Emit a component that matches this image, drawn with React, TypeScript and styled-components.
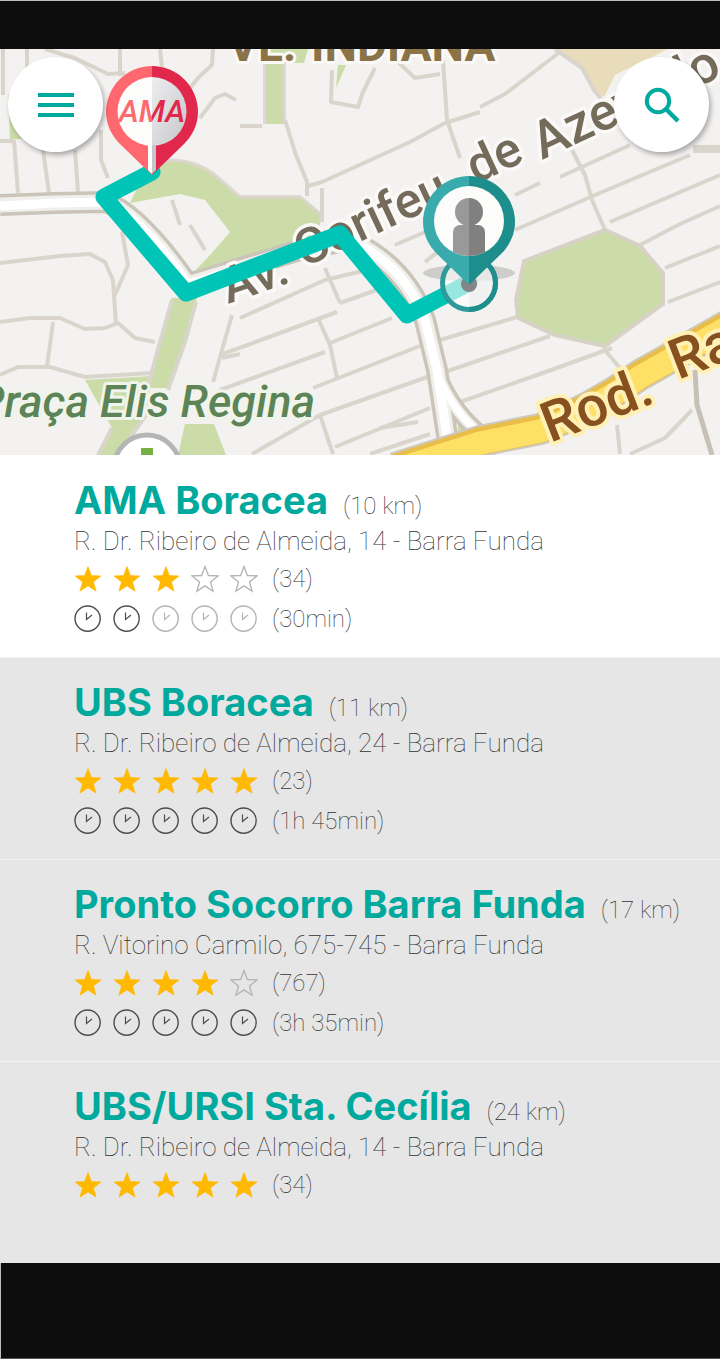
import React from "react";
import styled, { createGlobalStyle } from "styled-components";

const teal = "#00a99d";

const GlobalStyle = createGlobalStyle`
  * { box-sizing: border-box; }
  body { margin: 0; background: #0d0d0d; font-family: Roboto, "Liberation Sans", sans-serif; }
`;

const Screen = styled.div`
  display: flex;
  flex-direction: column;
  min-height: 100vh;
  background: #0d0d0d;
`;

const StatusBar = styled.div`
  height: 49px;
  border-top: 1px solid #bfbfbf;
  background: #0d0d0d;
`;

const NavigationBar = styled.div`
  flex: 1;
  min-height: 96px;
  border-left: 1px solid #bfbfbf;
  border-bottom: 1px solid #555;
  background: #0d0d0d;
`;

const MapPanel = styled.section`
  position: relative;
  height: 406px;
  overflow: hidden;
  background: #f3f2f0;
`;

const MapCanvas = styled.svg`
  display: block;
  width: 100%;
  height: 100%;
`;

const MapControls = styled.div`
  position: absolute;
  top: 0;
  left: 0;
  right: 0;
  display: flex;
  justify-content: space-between;
  padding: 8px 11px 0 8px;
`;

const RoundButton = styled.button`
  display: flex;
  align-items: center;
  justify-content: center;
  width: 95px;
  height: 95px;
  padding: 0;
  border: 0;
  border-radius: 50%;
  background: #fff;
  box-shadow: 2px 3px 5px rgba(0, 0, 0, 0.3);
  cursor: pointer;
`;

const PlaceList = styled.ul`
  margin: 0;
  padding: 0;
  list-style: none;
`;

const PlaceItem = styled.li<{ $active?: boolean }>`
  min-height: 202px;
  padding: 24px 24px 0 74px;
  border-top: 1px solid ${(p) => (p.$active ? "#fff" : "#f2f2f2")};
  background: ${(p) => (p.$active ? "#fff" : "#e6e6e6")};
  color: #333;
`;

const Heading = styled.div`
  display: flex;
  align-items: baseline;
  gap: 15px;
  height: 42px;
  white-space: nowrap;
`;

const Name = styled.h2`
  margin: 0;
  font: 700 38px/40px Inter, "Liberation Sans", sans-serif;
  color: ${teal};
`;

const Detail = styled.span`
  font-size: 24px;
  font-weight: 100;
  line-height: 36px;
`;

const Address = styled.p`
  margin: 0;
  font-size: 26px;
  font-weight: 100;
  line-height: 38px;
  height: 37px;
  white-space: nowrap;
`;

const Meter = styled.div`
  display: flex;
  align-items: center;
  gap: 14px;
  height: 40px;
`;

const Icons = styled.div`
  display: flex;
  gap: 11px;
`;

const Star = ({ on }: { on: boolean }) => (
  <svg width="28" height="28" viewBox="0 0 28 28" aria-hidden="true">
    <path
      d="M14 1.500l3.400 9 9.600.4-7.500 6 2.600 9.300-8.100-5.300-8.100 5.300 2.600-9.300L1 10.900l9.600-.4z"
      fill={on ? "#ffb900" : "none"}
      stroke={on ? "#ffb900" : "#b3b3b3"}
      strokeWidth={on ? 0.6 : 1.3}
    />
  </svg>
);

const Clock = ({ on }: { on: boolean }) => (
  <svg width="28" height="28" viewBox="0 0 28 28" aria-hidden="true">
    <g fill="none" stroke={on ? "#4d4d4d" : "#b3b3b3"}>
      <circle cx="13.600" cy="13.600" r="12.600" strokeWidth="1.400" />
      <path d="M12.500 7.500v7l5.500-4.500" strokeWidth="1.200" />
    </g>
  </svg>
);

const minorStreets = [
  "M3 49V95M27 49V70M45 49L75 58 108 74 125 73M120 49V76M160 49L163 76M213 49L212 65 198 78 190 88M200 118L215 98 225 94 236 100",
  "M0 141H14M14 140L18 193M43 150L49 193M75 150L78 193M101 130V160L108 178M172 200L180 225",
  "M285 120L296 155 307 182V196M332 70L331 102 358 107 363 92 375 68M398 62L415 78 440 74M443 60L447 120 460 158",
  "M480 112L445 123 410 142 322 182 308 186M240 126H262M322 188V222",
  "M480 107L505 94 560 52M572 150L585 175 592 200 605 230M515 195L540 183M560 177L630 145M515 230L595 195 690 155M610 222L720 175M640 245L680 224 720 206M665 268L720 246M668 302L720 282",
  "M440 340L517 317M445 372L550 336M460 402L540 374 612 348M603 348L620 368M617 425L620 454M630 454L665 438 692 410",
  "M240 318L325 280 400 262M340 303L385 287M220 355L337 312M330 343L392 318M220 390L325 352M313 388L420 346M320 415L430 376M252 454L320 415M335 447L430 408M370 454L430 434M325 268L340 303M318 318L330 345 337 378M320 415L333 454",
  "M0 263L60 256 90 254 105 262 113 280 116 325M122 232L128 265 115 295M0 322L30 318 60 318 85 329 105 328 118 323 135 338 155 342M53 322L47 367M0 375L18 367 50 367 85 377 152 373M232 315L222 350 213 382M222 358L240 354M190 225L205 250",
  "M380 428L418 422M470 205L460 240M425 262L440 250M395 245L425 232 500 200",
];

const CityMap = () => (
  <MapCanvas viewBox="0 49 720 406" preserveAspectRatio="xMidYMid slice" role="img" aria-label="Mapa">
    <rect x="-400" y="49" width="1520" height="406" fill="#f3f2f0" />
    <g fill="#cbdca9">
      <path d="M8 95H22V139H10z" />
      <path d="M150 162Q192 155 218 178L240 197H300L322 214 318 234 225 272 190 290 188 278 210 255 230 232 205 200 180 194 130 203z" />
      <path d="M172 298L197 298 185 342 168 388H148L160 342z" />
      <path d="M85 380L152 376 146 415 130 440 118 455H98L112 428z" />
      <path d="M185 424H214L226 455H178z" />
      <path d="M265 49H308L304 63H284V124H265zM338 65H346L336 88z" />
      <path d="M458 420H478V436H458z" />
    </g>
    <path d="M555 49H668L615 75 604 97 594 90 582 68z" fill="#e8dcbb" />
    <g fill="none" stroke="#dad5cc" strokeWidth="4" strokeLinejoin="round">
      {minorStreets.map((d) => (
        <path key={d} d={d} />
      ))}
      <path d="M265 62V124M284 62V124M150 162Q192 155 218 178L240 197H300L322 216" opacity=".8" />
      <path d="M172 300L160 342 148 386M196 302L185 342 168 390M112 428L98 455M146 415L118 455M555 49L582 68 594 90 602 100" />
      <path d="M693 149H720" strokeWidth="8" />
    </g>
    <path
      d="M524 261L605 230 640 246 663 273V304L605 346 555 335 518 318 516 300z"
      fill="#cbdca9"
      stroke="#d8d2c6"
      strokeWidth="4"
    />
    <g fill="none" strokeLinejoin="round">
      <g stroke="#cbc4b8" strokeWidth="22">
        <path d="M0 205L55 203 106 202Q140 215 188 284L300 250 350 240Q405 265 425 320L437 370 450 455" />
        <path d="M440 380Q460 425 500 447" strokeWidth="18" />
      </g>
      <g stroke="#f1efec" strokeWidth="15">
        <path d="M0 205L55 203 106 202Q140 215 188 284L300 250 350 240Q405 265 425 320L437 370 450 455" />
        <path d="M440 380Q460 425 500 447" strokeWidth="11" />
      </g>
      <g stroke="#fff" strokeWidth="9">
        <path d="M0 206L55 203 106 202Q140 215 188 284L300 250 350 240Q405 265 425 320L437 370 450 455" />
        <path d="M440 380Q460 425 500 447" strokeWidth="7" />
      </g>
      <path d="M695 370L697 405 712 455" stroke="#c6c0b6" strokeWidth="5" />
      <path d="M395 468L480 441 540 429Q590 410 640 375L730 324" stroke="#cfc9bd" strokeWidth="32" />
      <path d="M395 468L480 441 540 429Q590 410 640 375L730 324" stroke="#e8bd48" strokeWidth="28" />
      <path d="M395 470L480 443 540 431Q590 412 640 377L730 326" stroke="#ffe066" strokeWidth="23" />
    </g>
    <circle cx="147" cy="468" r="33" fill="#fff" stroke="#b5b5b5" strokeWidth="5" />
    <path d="M141 455V448H153V455z" fill="#76b043" />

    <g fontFamily="Roboto, sans-serif" paintOrder="stroke" strokeLinejoin="round">
      <g fill="#8a7346" stroke="#faf9f7" strokeWidth="6" fontSize="46" fontWeight="700">
        <text x="228" y="61">VL.</text>
        <text x="311" y="61">INDIANA</text>
      </g>
      <g fill="#746b5b" stroke="#faf9f7" strokeWidth="7" fontSize="50" fontWeight="500">
        <text transform="translate(228 304) rotate(-19)">Av.</text>
        <text transform="translate(304 268) rotate(-25)">Corifeu</text>
        <text transform="translate(476 184) rotate(-25)">de</text>
        <text transform="translate(542 160) rotate(-25)" fontSize="52">Azevedo</text>
      </g>
      <text
        x="315"
        y="417"
        textAnchor="end"
        fill="#5c8457"
        stroke="#f1f4ea"
        strokeWidth="6"
        fontSize="45"
        fontStyle="italic"
        fontWeight="500"
      >
        Praça Elis Regina
      </text>
      <g fill="#87501f" stroke="#fff0b5" strokeWidth="8" fontSize="56" fontWeight="500">
        <text transform="translate(550 443) rotate(-21)">Rod.</text>
        <text transform="translate(678 380) rotate(-21)">Ra</text>
      </g>
    </g>

    <path
      d="M152 172L104 197 186 293 340 234 407 315 469 283"
      fill="none"
      stroke="#00c4b5"
      strokeWidth="17"
      strokeLinecap="round"
      strokeLinejoin="round"
    />

    <defs>
      <linearGradient id="amaText" gradientUnits="userSpaceOnUse" x1="151" x2="153" y1="0" y2="0">
        <stop offset="0.5" stopColor="#ff686e" />
        <stop offset="0.5" stopColor="#e1284c" />
      </linearGradient>
      <linearGradient id="amaShade" x1="0" x2="1" y1="0" y2="1">
        <stop offset="0" stopColor="#eeeeef" />
        <stop offset="1" stopColor="#c5c6c9" />
      </linearGradient>
      <linearGradient id="personFill" gradientUnits="userSpaceOnUse" x1="468" x2="470" y1="0" y2="0">
        <stop offset="0.5" stopColor="#999" />
        <stop offset="0.5" stopColor="#808080" />
      </linearGradient>
      <clipPath id="personClip">
        <circle cx="469" cy="221" r="35" />
      </clipPath>
    </defs>

    <path d="M152 66a46 46 0 0 0-46 46c0 13 6 24 14 32l32 31z" fill="#ff686e" />
    <path d="M152 66a46 46 0 0 1 46 46c0 13-6 24-14 32l-32 31z" fill="#e1284c" />
    <path d="M152 77a34.500 34.500 0 0 0 0 69z" fill="#fcfcfb" />
    <path d="M152 77a34.500 34.500 0 0 1 0 69z" fill="url(#amaShade)" />
    <path d="M148 145H152V174L148 170z" fill="#fff" />
    <path d="M152 145H156V170L152 174z" fill="#c5c6c9" />
    <text
      x="152"
      y="122"
      textAnchor="middle"
      fontFamily="Roboto, sans-serif"
      fontStyle="italic"
      fontWeight="500"
      fontSize="31"
      fill="url(#amaText)"
    >
      AMA
    </text>

    <ellipse cx="469" cy="273" rx="46" ry="8" fill="#777" opacity=".3" />
    <circle cx="469" cy="283" r="26.500" fill="#fff" fillOpacity=".6" stroke="#2f9a9a" strokeWidth="5" />
    <path d="M469 256.500a26.500 26.500 0 0 1 0 53" fill="#ddd" fillOpacity=".3" stroke="#1e8e8c" strokeWidth="5" />
    <circle cx="469" cy="284" r="8" fill="#858585" />
    <path d="M469 176a46 46 0 0 0-46 46c0 13 6 24 14 32l32 31z" fill="#3aabad" />
    <path d="M469 176a46 46 0 0 1 46 46c0 13-6 24-14 32l-32 31z" fill="#1e8e8c" />
    <circle cx="469" cy="221" r="35" fill="#fcfcfb" />
    <g clipPath="url(#personClip)" fill="url(#personFill)">
      <circle cx="469" cy="212" r="14" />
      <rect x="453" y="225" width="32" height="40" rx="7" />
    </g>
  </MapCanvas>
);

type Place = {
  name: string;
  distance: string;
  address: string;
  stars: number;
  reviews: string;
  wait?: string;
  clocks?: number;
};

const places: Place[] = [
  { name: "AMA Boracea", distance: "10 km", address: "R. Dr. Ribeiro de Almeida, 14 - Barra Funda", stars: 3, reviews: "34", clocks: 2, wait: "30min" },
  { name: "UBS Boracea", distance: "11 km", address: "R. Dr. Ribeiro de Almeida, 24 - Barra Funda", stars: 5, reviews: "23", clocks: 5, wait: "1h 45min" },
  { name: "Pronto Socorro Barra Funda", distance: "17 km", address: "R. Vitorino Carmilo, 675-745 - Barra Funda", stars: 4, reviews: "767", clocks: 5, wait: "3h 35min" },
  { name: "UBS/URSI Sta. Cecília", distance: "24 km", address: "R. Dr. Ribeiro de Almeida, 14 - Barra Funda", stars: 5, reviews: "34" },
];

const steps = [1, 2, 3, 4, 5];

export default function App() {
  return (
    <Screen>
      <GlobalStyle />
      <StatusBar />
      <MapPanel>
        <CityMap />
        <MapControls>
          <RoundButton type="button" aria-label="Menu">
            <svg width="36" height="24" viewBox="0 0 36 24">
              <path d="M0 2H36M0 12H36M0 22H36" stroke={teal} strokeWidth="4" />
            </svg>
          </RoundButton>
          <RoundButton type="button" aria-label="Buscar">
            <svg width="36" height="36" viewBox="0 0 36 36">
              <g fill="none" stroke={teal} strokeWidth="4">
                <circle cx="14" cy="14" r="11.200" />
                <path d="M21.500 21.500L34 34" strokeWidth="4.500" />
              </g>
            </svg>
          </RoundButton>
        </MapControls>
      </MapPanel>
      <PlaceList>
        {places.map((place, index) => (
          <PlaceItem key={place.name} $active={index === 0}>
            <Heading>
              <Name>{place.name}</Name>
              <Detail>({place.distance})</Detail>
            </Heading>
            <Address>{place.address}</Address>
            <Meter>
              <Icons>
                {steps.map((n) => (
                  <Star key={n} on={n <= place.stars} />
                ))}
              </Icons>
              <Detail>({place.reviews})</Detail>
            </Meter>
            {place.wait && (
              <Meter>
                <Icons>
                  {steps.map((n) => (
                    <Clock key={n} on={n <= (place.clocks ?? 0)} />
                  ))}
                </Icons>
                <Detail>({place.wait})</Detail>
              </Meter>
            )}
          </PlaceItem>
        ))}
      </PlaceList>
      <NavigationBar />
    </Screen>
  );
}
